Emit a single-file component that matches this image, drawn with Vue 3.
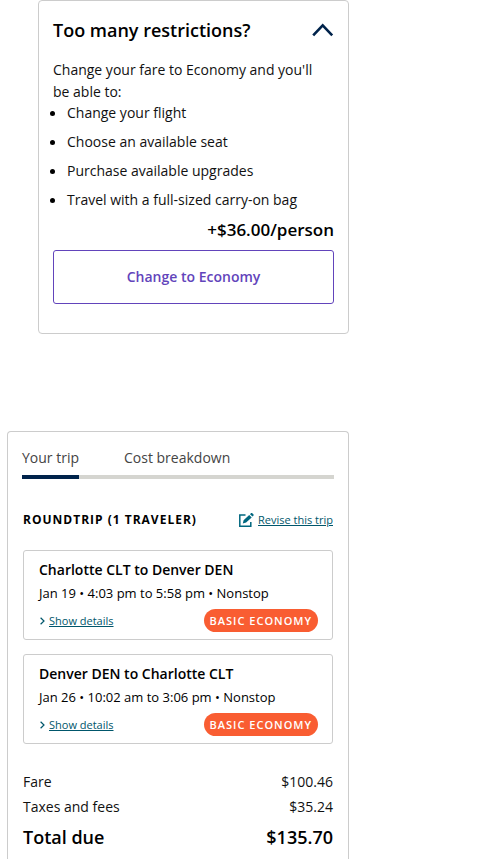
<script setup>
import { ref } from 'vue'

const open = ref(true)
const activeTab = ref('Your trip')
const tabs = ['Your trip', 'Cost breakdown']
const benefits = [
  'Change your flight',
  'Choose an available seat',
  'Purchase available upgrades',
  'Travel with a full-sized carry-on bag',
]
const flights = [
  { route: 'Charlotte CLT to Denver DEN', time: 'Jan 19 • 4:03 pm to 5:58 pm • Nonstop' },
  { route: 'Denver DEN to Charlotte CLT', time: 'Jan 26 • 10:02 am to 3:06 pm • Nonstop' },
]
</script>

<template>
  <main class="page">
    <section class="card upgrade">
      <header class="upgrade-head">
        <h2>Too many restrictions?</h2>
        <button class="toggle" type="button" aria-label="Toggle fare options" :aria-expanded="open" @click="open = !open">
          <svg width="22" height="14" viewBox="0 0 22 14" fill="none" stroke="#00234b" stroke-width="2.6">
            <path d="M1.2 12.4 10.7 2.4l9.5 10" />
          </svg>
        </button>
      </header>
      <div v-if="open">
        <p class="intro">Change your fare to Economy and you'll be able to:</p>
        <ul class="benefits">
          <li v-for="b in benefits" :key="b">{{ b }}</li>
        </ul>
        <p class="price">+$36.00/person</p>
        <button class="change" type="button">Change to Economy</button>
      </div>
    </section>

    <section class="card trip">
      <nav class="tabs">
        <button
          v-for="t in tabs"
          :key="t"
          type="button"
          class="tab"
          :class="{ active: t === activeTab }"
          @click="activeTab = t"
        >{{ t }}</button>
      </nav>

      <div class="trip-body">
        <div class="trip-head">
          <h3>ROUNDTRIP (1 TRAVELER)</h3>
          <a class="revise" href="#">
            <svg width="15" height="14" viewBox="0 0 15 14">
              <path d="M6.5 2H.8v11.2h11V9" fill="none" stroke="#00677f" stroke-width="1.5" />
              <path d="M3.8 10.4 4.6 7.2 10.2 1.9l2.5 2.5L7.1 9.6z M11 1.2 12.1.1h.9L14.6 1.6v.9L13.5 3.6z" fill="#00677f" />
            </svg>
            <span>Revise this trip</span>
          </a>
        </div>

        <article v-for="f in flights" :key="f.route" class="flight">
          <h4>{{ f.route }}</h4>
          <p>{{ f.time }}</p>
          <div class="flight-foot">
            <a class="details" href="#">
              <svg width="5" height="8" viewBox="0 0 5 8" fill="none" stroke="#00566b" stroke-width="1.2">
                <path d="M.6.7 4 4 .6 7.3" />
              </svg>
              <span>Show details</span>
            </a>
            <span class="badge">BASIC ECONOMY</span>
          </div>
        </article>

        <dl class="costs">
          <div><dt>Fare</dt><dd>$100.46</dd></div>
          <div><dt>Taxes and fees</dt><dd>$35.24</dd></div>
          <div class="total"><dt>Total due</dt><dd>$135.70</dd></div>
        </dl>
      </div>
    </section>
  </main>
</template>

<style>
body {
  background: #fff;
}
</style>

<style scoped>
.page {
  box-sizing: border-box;
  width: 70%;
  padding: 0 1px 0 7px;
  font: 14px/22px "Open Sans", "Noto Sans", sans-serif;
  color: #111;
}
h2, h3, h4, p, ul, dl, dd {
  margin: 0;
  padding: 0;
}
button {
  font: inherit;
  background: none;
  border: 0;
  padding: 0;
  cursor: pointer;
}
svg {
  display: block;
  flex: none;
}
.card {
  border: 1px solid #ccc;
  border-radius: 4px;
  padding: 14px;
}
.upgrade {
  margin-left: 31px;
  padding-bottom: 29px;
}
.upgrade-head {
  display: flex;
  justify-content: space-between;
  align-items: center;
  height: 30px;
  margin-bottom: 14px;
}
h2 {
  font-size: 18px;
  font-weight: 600;
  color: #000;
}
.intro {
  padding-right: 8px;
}
.benefits {
  list-style: none;
}
.benefits li {
  display: flex;
  align-items: center;
  line-height: 20px;
  margin-bottom: 9px;
}
.benefits li::before {
  content: "";
  width: 5px;
  height: 5px;
  margin: 0 12px 0 -3px;
  border-radius: 50%;
  background: #000;
}
.price {
  font-size: 17px;
  font-weight: 600;
  text-align: right;
  color: #000;
  margin-bottom: 9px;
}
.change {
  width: 100%;
  height: 54px;
  border: 1px solid #6244bb;
  border-radius: 3px;
  font-weight: 600;
  color: #6244bb;
}
.trip {
  margin-top: 97px;
  border-bottom: 0;
  border-radius: 4px 4px 0 0;
  padding-bottom: 9px;
}
.tabs {
  display: flex;
  gap: 45px;
  border-bottom: 4px solid #d5d5d0;
}
.tab {
  box-sizing: content-box;
  height: 23px;
  padding-bottom: 6px;
  margin-bottom: -4px;
  border-bottom: 4px solid transparent;
  color: #444;
}
.tab.active {
  border-color: #00234b;
}
.trip-body {
  padding: 0 1px;
}
.trip-head {
  display: flex;
  justify-content: space-between;
  align-items: center;
  margin: 30px 0 19px;
}
h3 {
  font-size: 12px;
  font-weight: 700;
  letter-spacing: 1px;
  color: #000;
}
a {
  color: #00566b;
  font-size: 11px;
  display: flex;
  align-items: center;
  gap: 4px;
  text-decoration: none;
}
a span {
  text-decoration: underline;
}
.flight {
  border: 1px solid #ccc;
  border-radius: 3px;
  padding: 8px 15px 7px;
  padding-right: 14px;
  margin-bottom: 14px;
}
h4 {
  font-size: 14px;
  font-weight: 600;
  color: #000;
}
.flight p {
  font-size: 13px;
  line-height: 24px;
  color: #000;
}
.flight-foot {
  display: flex;
  justify-content: space-between;
  align-items: center;
  margin-top: 4px;
}
.details {
  padding-left: 1px;
}
.badge {
  padding: 0 6px;
  border-radius: 12px;
  background: #f95d32;
  color: #fff;
  font-size: 11px;
  font-weight: 600;
  letter-spacing: 1px;
  line-height: 23px;
}
.costs {
  margin-top: 25px;
}
.costs div {
  display: flex;
  justify-content: space-between;
  line-height: 25px;
}
.costs .total {
  margin-top: 6px;
  font-size: 18px;
  font-weight: 600;
  color: #000;
}
</style>
